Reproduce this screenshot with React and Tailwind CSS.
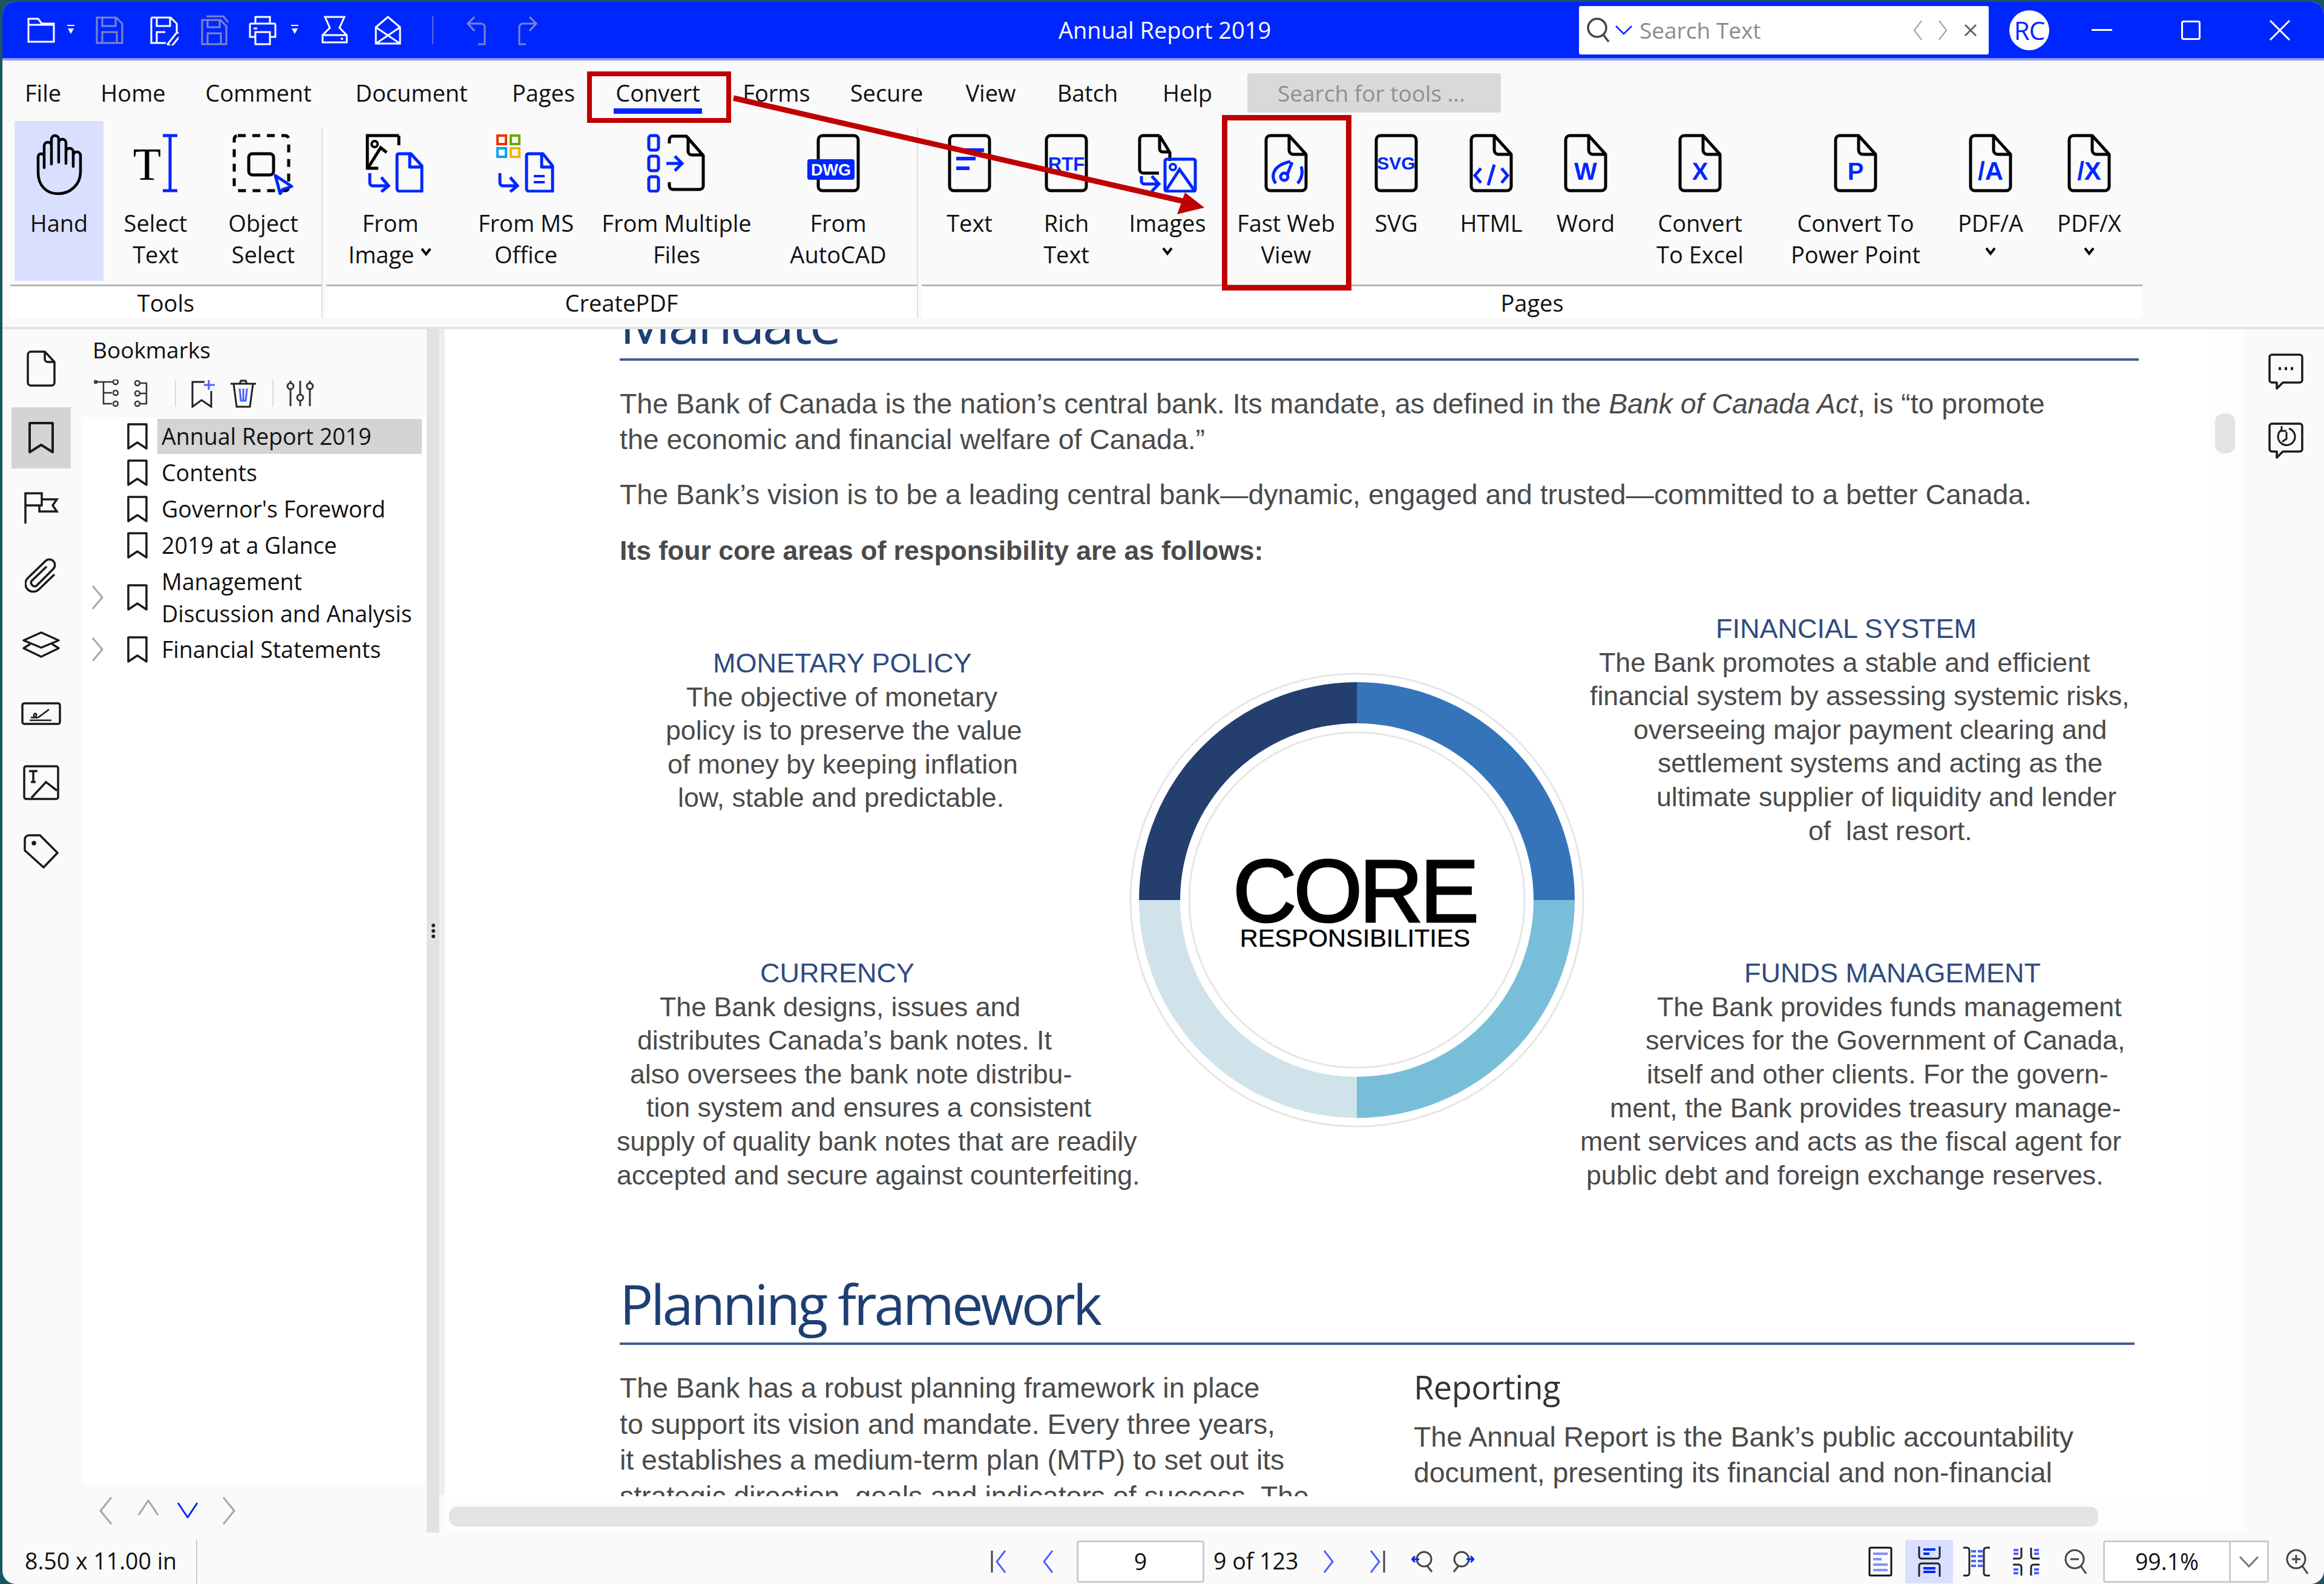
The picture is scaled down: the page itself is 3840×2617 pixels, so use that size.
import React from "react";

const BLUE = "#0026ff";

// small icons for the title bar
const QuickIcon = ({ className, children, vb = "0 0 48 50" }) => (
  <svg viewBox={vb} fill="none" strokeWidth="3" stroke="currentColor" className={className}>
    {children}
  </svg>
);

const DropTri = ({ className }) => (
  <svg viewBox="0 0 14 18" className={className} fill="#fff">
    <rect x="1" y="0" width="12" height="2" />
    <path d="M2 6h10l-5 9z" />
  </svg>
);

const DocFold = ({ children, className = "" }) => (
  <svg viewBox="0 0 72 97" fill="none" className={`w-[72px] h-[97px] ${className}`}>
    <path
      d="M41 3H10a7 7 0 0 0-7 7v77a7 7 0 0 0 7 7h52a7 7 0 0 0 7-7V34L41 3zM41 3v24a7 7 0 0 0 7 7h21"
      stroke="#000"
      strokeWidth="5"
      strokeLinejoin="round"
    />
    {children}
  </svg>
);

const DocPlain = ({ children, className = "" }) => (
  <svg viewBox="0 0 72 97" fill="none" className={`w-[72px] h-[97px] overflow-visible ${className}`}>
    <rect x="3" y="3" width="66" height="91" rx="7" stroke="#000" strokeWidth="5" />
    {children}
  </svg>
);

const BlueText = ({ x, y, size, children }) => (
  <text x={x} y={y} textAnchor="middle" fontSize={size} fontWeight="700" fontFamily="Liberation Sans" fill={BLUE}>
    {children}
  </text>
);

const Caret = ({ className = "" }) => (
  <svg viewBox="0 0 20 14" fill="none" stroke="#000" strokeWidth="4" className={`w-[20px] h-[14px] ${className}`}>
    <path d="M3 2l7 9 7-9" />
  </svg>
);

const HandIcon = () => (
  <svg viewBox="0 0 76 102" fill="none" stroke="#000" strokeWidth="4.5" strokeLinecap="round" className="w-[76px] h-[102px]">
    <path d="M3 64V38a5 5 0 0 1 10 0v18M13 40V20a6 6 0 0 1 12 0v30M25 30V9a6 6 0 0 1 12 0v38M37 28V15a6 6 0 0 1 12 0v34M49 30a6 6 0 0 1 12 0v24" />
    <path d="M3 64c0 22 14 35 33 35s37-14 37-36V36a6 6 0 0 0-12 0" />
  </svg>
);

const SelectTextIcon = () => (
  <svg viewBox="0 0 76 97" fill="none" className="w-[76px] h-[97px]">
    <text x="24" y="76" textAnchor="middle" fontSize="76" fontFamily="Liberation Serif" fill="#000">T</text>
    <path d="M62 3v91M50 3h24M50 94h24" stroke={BLUE} strokeWidth="5" />
  </svg>
);

const ObjectSelectIcon = () => (
  <svg viewBox="0 0 102 101" fill="none" className="w-[102px] h-[101px]">
    <rect x="3" y="3" width="90" height="91" rx="6" stroke="#000" strokeWidth="5" strokeDasharray="13 11" />
    <rect x="27" y="33" width="41" height="35" rx="6" stroke="#000" strokeWidth="5" />
    <path d="M71 69l27 18-15 5-4 7z" stroke={BLUE} strokeWidth="5" strokeLinejoin="round" fill="#fafafa" />
  </svg>
);

const FromImageIcon = () => (
  <svg viewBox="0 0 98 97" fill="none" className="w-[98px] h-[97px] ml-[16px]">
    <path d="M55 3H3v54h18" stroke="#000" strokeWidth="5" />
    <path d="M55 3v16" stroke="#000" strokeWidth="5" />
    <circle cx="15" cy="17" r="5" stroke="#000" strokeWidth="4" />
    <path d="M5 55l20-32 10 8" stroke="#000" strokeWidth="5" />
    <path d="M52 35v56a4 4 0 0 0 4 4h37V53L75 33H56a4 4 0 0 0-4 2zM73 34v21h20" stroke={BLUE} strokeWidth="5" strokeLinejoin="round" />
    <path d="M7 65v16a5 5 0 0 0 5 5h24M26 72l12 14-12 10" stroke={BLUE} strokeWidth="5" />
  </svg>
);

const OfficeIcon = () => (
  <svg viewBox="0 0 98 97" fill="none" className="w-[98px] h-[97px]">
    <rect x="2" y="3" width="14" height="14" stroke="#f03000" strokeWidth="4" />
    <rect x="24" y="3" width="14" height="14" stroke="#6aaa00" strokeWidth="4" />
    <rect x="2" y="24" width="14" height="14" stroke="#00a5ef" strokeWidth="4" />
    <rect x="24" y="24" width="14" height="14" stroke="#fcb100" strokeWidth="4" />
    <path d="M50 35v56a4 4 0 0 0 4 4h39V53L77 33H54a4 4 0 0 0-4 2zM75 34v21h18" stroke={BLUE} strokeWidth="5" strokeLinejoin="round" />
    <path d="M62 70h18M62 80h18" stroke={BLUE} strokeWidth="4" />
    <path d="M6 65v16a5 5 0 0 0 5 5h22M23 72l12 14-12 10" stroke={BLUE} strokeWidth="5" />
  </svg>
);

const MultiFilesIcon = () => (
  <svg viewBox="0 0 98 97" fill="none" className="w-[98px] h-[97px]">
    <rect x="3" y="3" width="16" height="24" rx="4" stroke={BLUE} strokeWidth="5" />
    <rect x="3" y="37" width="16" height="24" rx="4" stroke={BLUE} strokeWidth="5" />
    <rect x="3" y="71" width="16" height="24" rx="4" stroke={BLUE} strokeWidth="5" />
    <path d="M37 16v-6a6 6 0 0 1 6-6h22l28 32v50a6 6 0 0 1-6 6H43a6 6 0 0 1-6-6v-6" stroke="#000" strokeWidth="5" strokeLinejoin="round" />
    <path d="M68 5v24a6 6 0 0 0 6 6h19" stroke="#000" strokeWidth="5" />
    <path d="M32 49h24M46 37l12 12-12 12" stroke={BLUE} strokeWidth="5" />
  </svg>
);

const ImagesIcon = () => (
  <svg viewBox="0 0 98 97" fill="none" className="w-[98px] h-[97px]">
    <path d="M36 3H9a6 6 0 0 0-6 6v50a6 6 0 0 0 6 6h26M36 3l17 28v14M36 3v22a5 5 0 0 0 5 5h12" stroke="#000" strokeWidth="5" strokeLinejoin="round" />
    <rect x="45" y="42" width="50" height="53" rx="3" stroke={BLUE} strokeWidth="5" />
    <circle cx="58" cy="55" r="5" stroke={BLUE} strokeWidth="4" />
    <path d="M47 93l22-34 24 34" stroke={BLUE} strokeWidth="5" />
    <path d="M6 70v8a5 5 0 0 0 5 5h22M23 70l12 13-12 12" stroke={BLUE} strokeWidth="5" />
  </svg>
);

const RibbonItem = ({ width, icon, lines, caret, inlineCaret, bg = "" }) => (
  <div className={`${width} ${bg} h-[264px] flex flex-col items-center shrink-0`}>
    <div className="h-[142px] pt-[21px] flex justify-center">{icon}</div>
    {lines.map((line, i) => (
      <div key={i} className="h-[52px] leading-[52px] flex items-center whitespace-nowrap">
        {line}
        {inlineCaret && i === 1 && <Caret className="ml-[10px] mb-[8px]" />}
      </div>
    ))}
    {caret && <Caret className="mt-[14px]" />}
  </div>
);

const BookmarkGlyph = ({ className = "" }) => (
  <svg viewBox="0 0 34 44" fill="none" stroke="#1a1a1a" strokeWidth="3.5" className={`w-[34px] h-[44px] ${className}`}>
    <path d="M2 2h30v40L17 32 2 42z" strokeLinejoin="round" />
  </svg>
);

const Chevron = ({ d, color = "#a6a6a6", className }) => (
  <svg viewBox="0 0 40 50" fill="none" stroke={color} strokeWidth="3" className={className}>
    <path d={d} strokeLinejoin="round" />
  </svg>
);

const CoreRing = () => (
  <div className="relative w-[752px] h-[752px] mt-[172px] -mr-[18px] shrink-0">
    <svg viewBox="0 0 752 752" fill="none" className="w-[752px] h-[752px]">
      <circle cx="376" cy="376" r="374" stroke="#e6e6e6" strokeWidth="3" />
      <circle cx="376" cy="376" r="277" stroke="#e6e6e6" strokeWidth="3" />
      <path d="M376 16a360 360 0 0 1 360 360h-68a292 292 0 0 0-292-292z" fill="#3674ba" />
      <path d="M736 376a360 360 0 0 1-360 360v-68a292 292 0 0 0 292-292z" fill="#79bed9" />
      <path d="M376 736A360 360 0 0 1 16 376h68a292 292 0 0 0 292 292z" fill="#d1e3ea" />
      <path d="M16 376A360 360 0 0 1 376 16v68A292 292 0 0 0 84 376z" fill="#243f6e" />
    </svg>
    <div className="absolute inset-0 flex flex-col items-center pt-[308px] text-black font-['Liberation_Sans']">
      <div className="text-[146px] leading-[108px] tracking-[-5px] -ml-[8px] [-webkit-text-stroke:3px_#000]">CORE</div>
      <div className="text-[41.5px] leading-[46px] -ml-[6px] [-webkit-text-stroke:0.4px_#000]">RESPONSIBILITIES</div>
    </div>
  </div>
);

const SectionTitle = ({ className, children }) => (
  <div className={`h-[55.6px] leading-[55.6px] text-[45px] text-[#2f4b80] whitespace-nowrap ${className}`}>{children}</div>
);

const Line = ({ className = "", children }) => (
  <div className={`h-[55.6px] leading-[55.6px] whitespace-pre ${className}`}>{children}</div>
);

export default function App() {
  return (
    <div className="relative w-[3840px] h-[2617px] bg-[#1b5560] pl-[4px] pt-[3px] overflow-hidden font-['Open_Sans',sans-serif] text-[38px] text-[#111]">
      <div className="flex flex-col w-full h-full rounded-[22px] overflow-hidden bg-[#fafafa]">
        {/* title bar */}
        <div className="h-[97px] shrink-0 flex items-center bg-[#0026ff] border-b-[4px] border-[#8c9cf5] text-white">
          <div className="w-[1745px] shrink-0 flex items-center">
            <QuickIcon className="w-[48px] h-[50px] ml-[40px]">
              <path d="M3 44V6h16l6 8h20v30zM3 16h42" />
            </QuickIcon>
            <DropTri className="w-[14px] h-[18px] ml-[18px]" />
            <QuickIcon className="w-[48px] h-[50px] ml-[33px] text-[#7d86c9]">
              <path d="M3 4h32l10 10v32H3zM12 4v14h22V4M12 46V28h24v18" />
            </QuickIcon>
            <QuickIcon className="w-[48px] h-[50px] ml-[42px]">
              <path d="M3 4h32l10 10v14M3 4v42h24M12 4v14h22V4M12 46V28h14" />
              <path d="M30 48l14-18a4 4 0 0 1 6 5L36 52z" />
            </QuickIcon>
            <QuickIcon className="w-[48px] h-[50px] ml-[36px] text-[#7d86c9]">
              <path d="M3 8h30l10 10v30H3zM12 8v12h20V8M12 48V30h22v18M10 2h28l8 10" />
            </QuickIcon>
            <QuickIcon className="w-[48px] h-[50px] ml-[31px]">
              <path d="M12 14V3h24v11M12 36H3V16a2 2 0 0 1 2-2h38a2 2 0 0 1 2 2v20h-9M12 28h24v20H12zM9 22h6" />
            </QuickIcon>
            <DropTri className="w-[14px] h-[18px] ml-[22px]" />
            <QuickIcon className="w-[48px] h-[50px] ml-[35px]">
              <path d="M8 3h32l-8 18 12 12v12H4V33l12-12zM4 33h40M34 39h4" />
            </QuickIcon>
            <QuickIcon className="w-[48px] h-[50px] ml-[40px]">
              <path d="M24 3L4 20v27h40V20zM4 20l40 27M44 20L4 47" />
            </QuickIcon>
            <div className="w-[2px] h-[46px] ml-[49px] bg-[#5c6ae0]" />
            <QuickIcon vb="0 0 36 50" className="w-[36px] h-[50px] ml-[54px] text-[#7d86c9]">
              <path d="M14 3L3 14l11 12M3 14h22a6 6 0 0 1 6 6v28H20" />
            </QuickIcon>
            <QuickIcon vb="0 0 36 50" className="w-[36px] h-[50px] ml-[47px] text-[#7d86c9]">
              <path d="M22 3l11 11-11 12M33 14H11a6 6 0 0 0-6 6v28h11" />
            </QuickIcon>
          </div>
          <div className="w-[860px] shrink-0 whitespace-nowrap">Annual Report 2019</div>
          <div className="w-[677px] h-[80px] shrink-0 bg-white rounded-[3px] flex items-center text-[#8c8c8c] text-[37px]">
            <svg viewBox="0 0 40 44" fill="none" stroke="#444" strokeWidth="3.5" className="w-[40px] h-[44px] ml-[12px]">
              <circle cx="18" cy="18" r="15" />
              <path d="M28 29l9 12" />
            </svg>
            <svg viewBox="0 0 30 18" fill="none" stroke={BLUE} strokeWidth="2.5" className="w-[30px] h-[18px] ml-[7px]">
              <path d="M2 2l13 13L28 2" />
            </svg>
            <span className="ml-[11px] w-[215px] whitespace-nowrap">Search Text</span>
            <Chevron d="M28 4L12 25l16 21" className="w-[30px] h-[44px] ml-[230px]" />
            <Chevron d="M12 4l16 21-16 21" className="w-[30px] h-[44px] ml-[11px]" />
            <svg viewBox="0 0 22 22" fill="none" stroke="#666" strokeWidth="3" className="w-[22px] h-[22px] ml-[20px]">
              <path d="M2 2l18 18M20 2L2 20" />
            </svg>
          </div>
          <div className="w-[66px] h-[66px] ml-[34px] rounded-full bg-white text-[#0026ff] flex items-center justify-center text-[42px] tracking-[-1px]">RC</div>
          <div className="w-[147px] ml-[14px] flex justify-center">
            <div className="w-[34px] h-[3px] bg-white" />
          </div>
          <div className="w-[147px] flex justify-center">
            <div className="w-[32px] h-[32px] rounded-[4px] border-[3px] border-white" />
          </div>
          <div className="w-[147px] flex justify-center">
            <svg viewBox="0 0 36 36" fill="none" stroke="#fff" strokeWidth="3" className="w-[36px] h-[36px]">
              <path d="M2 2l32 32M34 2L2 34" />
            </svg>
          </div>
        </div>

        {/* menu tabs */}
        <div className="h-[100px] shrink-0 flex items-start pt-[27px]">
          <div className="w-[134px] text-center leading-[52px]">File</div>
          <div className="w-[164px] text-center leading-[52px]">Home</div>
          <div className="w-[250px] text-center leading-[52px]">Comment</div>
          <div className="w-[256px] text-center leading-[52px]">Document</div>
          <div className="w-[180px] text-center leading-[52px]">Pages</div>
          <div className="w-[198px] flex flex-col items-center leading-[52px]">
            <div>Convert</div>
            <div className="w-[146px] h-[9px] bg-[#0026ff]" />
          </div>
          <div className="w-[194px] text-center leading-[52px]">Forms</div>
          <div className="w-[170px] text-center leading-[52px]">Secure</div>
          <div className="w-[174px] text-center leading-[52px]">View</div>
          <div className="w-[146px] text-center leading-[52px]">Batch</div>
          <div className="w-[184px] text-center leading-[52px]">Help</div>
          <div className="w-[419px] h-[65px] ml-[7px] -mt-[6px] bg-[#d9d9d9] rounded-[4px] pl-[50px] leading-[65px] text-[37px] text-[#8f8f8f] whitespace-nowrap">Search for tools ...</div>
        </div>

        {/* ribbon */}
        <div className="h-[325px] shrink-0 flex items-start">
          <div className="w-[514px] ml-[13px] shrink-0 flex flex-col">
            <div className="h-[270px] flex pl-[7px]">
              <RibbonItem width="w-[147px]" bg="bg-[#d9e0ff]" icon={<HandIcon />} lines={["Hand"]} />
              <RibbonItem width="w-[172px]" icon={<SelectTextIcon />} lines={["Select", "Text"]} />
              <RibbonItem width="w-[184px]" icon={<ObjectSelectIcon />} lines={["Object", "Select"]} />
            </div>
            <div className="h-[3px] bg-[#b5b5b5]" />
            <div className="h-[52px] bg-white text-center leading-[55px]">Tools</div>
          </div>
          <div className="w-[2px] h-[315px] mt-[10px] bg-[#dedede] shrink-0" />
          <div className="w-[976px] ml-[6px] shrink-0 flex flex-col">
            <div className="h-[270px] flex">
              <RibbonItem width="w-[212px]" icon={<FromImageIcon />} lines={["From", "Image"]} inlineCaret />
              <RibbonItem width="w-[236px]" icon={<OfficeIcon />} lines={["From MS", "Office"]} />
              <RibbonItem width="w-[262px]" icon={<MultiFilesIcon />} lines={["From Multiple", "Files"]} />
              <RibbonItem
                width="w-[266px] pl-[6px]"
                lines={["From", "AutoCAD"]}
                icon={
                  <DocPlain>
                    <rect x="-15" y="42" width="78" height="34" rx="4" fill={BLUE} />
                    <text x="24" y="69" textAnchor="middle" fontSize="27" fontWeight="700" fontFamily="Liberation Sans" fill="#fff">DWG</text>
                  </DocPlain>
                }
              />
            </div>
            <div className="h-[3px] bg-[#b5b5b5]" />
            <div className="h-[52px] bg-white text-center leading-[55px]">CreatePDF</div>
          </div>
          <div className="w-[2px] h-[315px] mt-[10px] bg-[#dedede] shrink-0" />
          <div className="w-[2017px] ml-[6px] shrink-0 flex flex-col">
            <div className="h-[270px] flex">
              <RibbonItem
                width="w-[158px]"
                lines={["Text"]}
                icon={
                  <DocPlain>
                    <path d="M14 27h46M14 41h32M14 57h22" stroke={BLUE} strokeWidth="6" />
                  </DocPlain>
                }
              />
              <RibbonItem
                width="w-[162px]"
                lines={["Rich", "Text"]}
                icon={
                  <DocPlain>
                    <BlueText x="36" y="61" size="31">RTF</BlueText>
                  </DocPlain>
                }
              />
              <RibbonItem width="w-[172px]" icon={<ImagesIcon />} lines={["Images"]} caret />
              <RibbonItem
                width="w-[220px]"
                lines={["Fast Web", "View"]}
                icon={
                  <DocFold>
                    <path d="M19 82C10 70 14 52 43 46M61 54c3 10 1 20-6 28" stroke={BLUE} strokeWidth="5" />
                    <circle cx="33" cy="71" r="6" stroke={BLUE} strokeWidth="5" />
                    <path d="M38 67l8-20" stroke={BLUE} strokeWidth="5" />
                  </DocFold>
                }
              />
              <RibbonItem
                width="w-[144px]"
                lines={["SVG"]}
                icon={
                  <DocPlain>
                    <BlueText x="36" y="59" size="30">SVG</BlueText>
                  </DocPlain>
                }
              />
              <RibbonItem
                width="w-[170px]"
                lines={["HTML"]}
                icon={
                  <DocFold>
                    <path d="M19 57L9 69l10 12M53 57l10 12-10 12M41 51L31 85" stroke={BLUE} strokeWidth="5" />
                  </DocFold>
                }
              />
              <RibbonItem
                width="w-[142px]"
                lines={["Word"]}
                icon={
                  <DocFold>
                    <BlueText x="36" y="76" size="40">W</BlueText>
                  </DocFold>
                }
              />
              <RibbonItem
                width="w-[236px]"
                lines={["Convert", "To Excel"]}
                icon={
                  <DocFold>
                    <BlueText x="36" y="76" size="40">X</BlueText>
                  </DocFold>
                }
              />
              <RibbonItem
                width="w-[278px]"
                lines={["Convert To", "Power Point"]}
                icon={
                  <DocFold>
                    <BlueText x="36" y="76" size="40">P</BlueText>
                  </DocFold>
                }
              />
              <RibbonItem
                width="w-[168px]"
                lines={["PDF/A"]}
                caret
                icon={
                  <DocFold>
                    <BlueText x="36" y="76" size="42">/A</BlueText>
                  </DocFold>
                }
              />
              <RibbonItem
                width="w-[158px]"
                lines={["PDF/X"]}
                caret
                icon={
                  <DocFold>
                    <BlueText x="36" y="76" size="42">/X</BlueText>
                  </DocFold>
                }
              />
            </div>
            <div className="h-[3px] bg-[#b5b5b5]" />
            <div className="h-[52px] bg-white text-center leading-[55px]">Pages</div>
          </div>
        </div>
        <div className="h-[15px] shrink-0" />
        <div className="h-[4px] shrink-0 bg-[#e4e4e4]" />

        {/* main area */}
        <div className="flex-1 min-h-0 flex">
          {/* icon rail */}
          <div className="w-[133px] shrink-0 flex flex-col items-center pt-[8px] pr-[5px]">
            <div className="h-[114px] flex items-center justify-center">
              <svg viewBox="0 0 48 60" fill="none" stroke="#1a1a1a" strokeWidth="3.5" className="w-[48px] h-[60px]">
                <path d="M30 2H7a5 5 0 0 0-5 5v46a5 5 0 0 0 5 5h34a5 5 0 0 0 5-5V19zM30 2v12a5 5 0 0 0 5 5h11" strokeLinejoin="round" />
              </svg>
            </div>
            <div className="h-[114px] flex items-center justify-center">
              <div className="w-[98px] h-[101px] bg-[#d4d4d4] flex items-center justify-center">
                <svg viewBox="0 0 44 54" fill="none" stroke="#1a1a1a" strokeWidth="4" className="w-[44px] h-[54px]">
                  <path d="M3 3h38v48L22 39 3 51z" strokeLinejoin="round" />
                </svg>
              </div>
            </div>
            <div className="h-[114px] flex items-center justify-center">
              <svg viewBox="0 0 58 56" fill="none" stroke="#1a1a1a" strokeWidth="3.5" className="w-[58px] h-[56px]">
                <path d="M3 56V6h27v10h25l-7 10 7 10H26V26H3M30 16v10h-4" />
              </svg>
            </div>
            <div className="h-[114px] flex items-center justify-center">
              <svg viewBox="0 0 54 58" fill="none" stroke="#1a1a1a" strokeWidth="3.5" className="w-[54px] h-[58px]">
                <path d="M36 14L11 38a6 6 0 0 0 8 8l28-28a9 9 0 0 0-13-13L5 33a13 13 0 0 0 18 19l26-25" />
              </svg>
            </div>
            <div className="h-[114px] flex items-center justify-center">
              <svg viewBox="0 0 64 44" fill="none" stroke="#1a1a1a" strokeWidth="3.5" className="w-[64px] h-[44px]">
                <path d="M32 2l29 13-29 12L3 15zM14 21L3 28l29 14 29-14-11-7" strokeLinejoin="round" />
              </svg>
            </div>
            <div className="h-[114px] flex items-center justify-center">
              <svg viewBox="0 0 66 38" fill="none" stroke="#1a1a1a" strokeWidth="3.5" className="w-[66px] h-[38px]">
                <rect x="2" y="2" width="62" height="34" rx="3" />
                <path d="M14 30h36M16 25c6 2 10-1 9-5-2-3-5 0-4 4 3 3 7 2 9 0l16-12" strokeWidth="2.5" />
              </svg>
            </div>
            <div className="h-[114px] flex items-center justify-center">
              <svg viewBox="0 0 60 58" fill="none" stroke="#1a1a1a" strokeWidth="3.5" className="w-[60px] h-[58px]">
                <rect x="2" y="2" width="56" height="54" rx="3" />
                <path d="M10 10h14M17 10v18M13 28h8" strokeWidth="3.5" />
                <path d="M14 54l24-26 18 14" />
              </svg>
            </div>
            <div className="h-[114px] flex items-center justify-center">
              <svg viewBox="0 0 60 58" fill="none" stroke="#1a1a1a" strokeWidth="3.5" className="w-[60px] h-[58px]">
                <path d="M10 2h18l29 29-23 24L3 27V9a7 7 0 0 1 7-7z" strokeLinejoin="round" />
                <circle cx="18" cy="15" r="2" fill="#1a1a1a" />
              </svg>
            </div>
          </div>

          {/* bookmarks panel */}
          <div className="w-[568px] shrink-0 flex flex-col text-[37.5px]">
            <div className="h-[146px] shrink-0 pt-[8px]">
              <div className="pl-[16px] leading-[52px] text-[37px]">Bookmarks</div>
              <div className="flex items-center mt-[21px] h-[50px]">
                <svg viewBox="0 0 44 46" fill="none" stroke="#333" strokeWidth="2.5" className="w-[44px] h-[46px] ml-[18px]">
                  <path d="M3 4h30M16 4v36h14M16 22h14" />
                  <circle cx="3" cy="4" r="2" />
                  <circle cx="36" cy="4" r="4" />
                  <circle cx="36" cy="22" r="4" />
                  <circle cx="36" cy="40" r="4" />
                </svg>
                <svg viewBox="0 0 26 46" fill="none" stroke="#333" strokeWidth="2.5" className="w-[26px] h-[46px] ml-[21px]">
                  <circle cx="7" cy="6" r="4" />
                  <circle cx="7" cy="23" r="4" />
                  <circle cx="7" cy="40" r="4" />
                  <path d="M11 6h11v34H11M11 23h11" />
                </svg>
                <div className="w-[2px] h-[44px] ml-[43px] bg-[#dcdcdc]" />
                <svg viewBox="0 0 42 48" fill="none" strokeWidth="3" className="w-[42px] h-[48px] ml-[25px]">
                  <path d="M22 5H2v41l15-11 16 11V20" stroke="#222" />
                  <path d="M29 2v16M21 10h18" stroke="#4a63ff" />
                </svg>
                <svg viewBox="0 0 44 48" fill="none" strokeWidth="3" className="w-[44px] h-[48px] ml-[22px]">
                  <path d="M1 8h42M16 8l2-5h8l2 5M6 8l5 38h22l5-38" stroke="#222" />
                  <path d="M16 16l2 20h8l2-20M22 16v20" stroke="#4a63ff" />
                </svg>
                <div className="w-[2px] h-[44px] ml-[26px] bg-[#dcdcdc]" />
                <svg viewBox="0 0 46 46" fill="none" stroke="#333" strokeWidth="3" className="w-[46px] h-[46px] ml-[21px]">
                  <path d="M7 16v28M23 2v22M23 36v8M39 16v28M39 2v4M7 2v4" />
                  <circle cx="7" cy="11" r="5" />
                  <circle cx="23" cy="30" r="5" />
                  <circle cx="39" cy="11" r="5" />
                </svg>
              </div>
            </div>
            <div className="flex-1 bg-white pt-[1px]">
              <div className="h-[60px] flex items-center">
                <BookmarkGlyph className="ml-[73px]" />
                <div className="ml-[16px] w-[437px] h-[58px] bg-[#d4d4d4] pl-[7px] leading-[58px] whitespace-nowrap">Annual Report 2019</div>
              </div>
              <div className="h-[60px] flex items-center">
                <BookmarkGlyph className="ml-[73px]" />
                <div className="ml-[23px] whitespace-nowrap">Contents</div>
              </div>
              <div className="h-[60px] flex items-center">
                <BookmarkGlyph className="ml-[73px]" />
                <div className="ml-[23px] whitespace-nowrap">Governor&#39;s Foreword</div>
              </div>
              <div className="h-[60px] flex items-center">
                <BookmarkGlyph className="ml-[73px]" />
                <div className="ml-[23px] whitespace-nowrap">2019 at a Glance</div>
              </div>
              <div className="h-[112px] flex items-center">
                <Chevron d="M6 6l16 19-16 19" className="w-[40px] h-[50px] ml-[10px]" />
                <BookmarkGlyph className="ml-[23px]" />
                <div className="ml-[23px] leading-[53px] whitespace-nowrap">
                  Management
                  <br />
                  Discussion and Analysis
                </div>
              </div>
              <div className="h-[60px] flex items-center">
                <Chevron d="M6 6l16 19-16 19" className="w-[40px] h-[50px] ml-[10px]" />
                <BookmarkGlyph className="ml-[23px]" />
                <div className="ml-[23px] whitespace-nowrap">Financial Statements</div>
              </div>
            </div>
            <div className="h-[80px] shrink-0 flex items-center pt-[8px]">
              <Chevron d="M24 3L6 25l18 22" className="w-[40px] h-[50px] ml-[23px]" />
              <Chevron d="M4 32L20 8l16 24" className="w-[40px] h-[50px] ml-[25px]" />
              <Chevron d="M4 12l16 24 16-24" color={BLUE} className="w-[40px] h-[50px] ml-[25px]" />
              <Chevron d="M16 3l18 22-18 22" className="w-[40px] h-[50px] ml-[23px]" />
            </div>
          </div>

          {/* splitter */}
          <div className="w-[21px] shrink-0 bg-[#e2e2e2] flex flex-col items-center justify-center gap-[3px]">
            <div className="w-[6px] h-[6px] rounded-full bg-[#222]" />
            <div className="w-[6px] h-[6px] rounded-full bg-[#222]" />
            <div className="w-[6px] h-[6px] rounded-full bg-[#222]" />
          </div>
          <div className="w-[9px] shrink-0 h-[1926px] bg-[#eeeeee]" />

          {/* document */}
          <div className="flex-1 min-w-0 flex flex-col">
            <div className="h-[1928px] shrink-0 flex">
              <div className="w-[2915px] shrink-0 bg-white overflow-hidden pl-[289px] font-['Liberation_Sans'] text-[46.4px] text-[#4a4a4a]">
                <div className="h-[48px] overflow-hidden flex items-end pb-[10px] font-['Open_Sans'] font-medium text-[94px] tracking-[-4px] leading-[100px] text-[#1f3f73]">Mandate</div>
                <div className="w-[2510px] h-[4px] bg-[#3f5f8f]" />
                <div className="mt-[42px] leading-[59px] whitespace-nowrap">
                  The Bank of Canada is the nation’s central bank. Its mandate, as defined in the <i>Bank of Canada Act</i>, is “to promote
                  <br />
                  the economic and financial welfare of Canada.”
                </div>
                <div className="mt-[32px] leading-[59px] whitespace-nowrap">The Bank’s vision is to be a leading central bank—dynamic, engaged and trusted—committed to a better Canada.</div>
                <div className="mt-[33px] leading-[59px] text-[44.5px] font-bold whitespace-nowrap">Its four core areas of responsibility are as follows:</div>

                {/* core responsibilities */}
                <div className="flex h-[1030px] -ml-[24px] text-[44.7px]">
                  <div className="w-[866px] shrink-0 pt-[129px]">
                    <SectionTitle className="ml-[178px]">MONETARY POLICY</SectionTitle>
                    <Line className="ml-[134px]">The objective of monetary</Line>
                    <Line className="ml-[100px]">policy is to preserve the value</Line>
                    <Line className="ml-[103px]">of money by keeping inflation</Line>
                    <Line className="ml-[120px]">low, stable and predictable.</Line>
                    <SectionTitle className="mt-[234px] ml-[256px]">CURRENCY</SectionTitle>
                    <Line className="ml-[90px]">The Bank designs, issues and</Line>
                    <Line className="ml-[53px]">distributes Canada’s bank notes. It</Line>
                    <Line className="ml-[41px]">also oversees the bank note distribu-</Line>
                    <Line className="ml-[68px]">tion system and ensures a consistent</Line>
                    <Line className="ml-[19px]">supply of quality bank notes that are readily</Line>
                    <Line className="ml-[19px]">accepted and secure against counterfeiting.</Line>
                  </div>
                  <CoreRing />
                  <div className="flex-1 pt-[72px]">
                    <SectionTitle className="ml-[235px]">FINANCIAL SYSTEM</SectionTitle>
                    <Line className="ml-[42px]">The Bank promotes a stable and efficient</Line>
                    <Line className="ml-[27px]">financial system by assessing systemic risks,</Line>
                    <Line className="ml-[99px]">overseeing major payment clearing and</Line>
                    <Line className="ml-[139px]">settlement systems and acting as the</Line>
                    <Line className="ml-[137px]">ultimate supplier of liquidity and lender</Line>
                    <Line className="ml-[388px]">of  last resort.</Line>
                    <SectionTitle className="mt-[180px] ml-[282px]">FUNDS MANAGEMENT</SectionTitle>
                    <Line className="ml-[138px]">The Bank provides funds management</Line>
                    <Line className="ml-[119px]">services for the Government of Canada,</Line>
                    <Line className="ml-[121px]">itself and other clients. For the govern-</Line>
                    <Line className="ml-[60px]">ment, the Bank provides treasury manage-</Line>
                    <Line className="ml-[11px]">ment services and acts as the fiscal agent for</Line>
                    <Line className="ml-[21px]">public debt and foreign exchange reserves.</Line>
                  </div>
                </div>

                <div className="mt-[130px] h-[110px] leading-[110px] font-['Open_Sans'] font-medium text-[92px] tracking-[-4px] text-[#1f3f73] whitespace-nowrap">Planning framework</div>
                <div className="mt-[9px] w-[2503px] h-[4px] bg-[#3f5f8f]" />
                <div className="flex mt-[42px]">
                  <div className="w-[1312px] shrink-0 leading-[59.5px] whitespace-nowrap">
                    The Bank has a robust planning framework in place
                    <br />
                    to support its vision and mandate. Every three years,
                    <br />
                    it establishes a medium-term plan (MTP) to set out its
                    <br />
                    strategic direction, goals and indicators of success. The
                  </div>
                  <div className="whitespace-nowrap -mt-[3px]">
                    <div className="h-[60px] leading-[60px] font-['Open_Sans'] font-medium text-[54px] tracking-[-0.5px] text-[#333]">Reporting</div>
                    <div className="mt-[24px] leading-[59px]">
                      The Annual Report is the Bank’s public accountability
                      <br />
                      document, presenting its financial and non-financial
                    </div>
                  </div>
                </div>
              </div>
              <div className="flex-1 bg-[#fdfdfd] pl-[10px] pt-[139px]">
                <div className="w-[33px] h-[66px] rounded-[14px] bg-[#e3e3e3]" />
              </div>
            </div>
            <div className="flex-1 bg-[#fdfdfd] pt-[17px] pl-[7px]">
              <div className="w-[2725px] h-[33px] rounded-[14px] bg-[#e3e3e3]" />
            </div>
          </div>

          {/* right rail */}
          <div className="w-[129px] shrink-0 flex flex-col items-center pt-[40px] pl-[2px]">
            <svg viewBox="0 0 58 60" fill="none" stroke="#1a1a1a" strokeWidth="3.5" className="w-[58px] h-[60px]">
              <path d="M6 2h46a4 4 0 0 1 4 4v38a4 4 0 0 1-4 4H24l-10 10v-10H6a4 4 0 0 1-4-4V6a4 4 0 0 1 4-4z" strokeLinejoin="round" />
              <path d="M17 25h4M27 25h4M37 25h4" strokeWidth="5" />
            </svg>
            <svg viewBox="0 0 58 60" fill="none" stroke="#1a1a1a" strokeWidth="3.5" className="w-[58px] h-[60px] mt-[54px]">
              <path d="M6 2h46a4 4 0 0 1 4 4v38a4 4 0 0 1-4 4H24l-10 10v-10H6a4 4 0 0 1-4-4V6a4 4 0 0 1 4-4z" strokeLinejoin="round" />
              <path d="M22 12a14 14 0 1 0 12-2M30 16v11l-7 5M22 6v8h8" strokeWidth="3" />
            </svg>
          </div>
        </div>

        {/* status bar */}
        <div className="h-[85px] shrink-0 flex items-center pt-[10px] text-[37.5px]">
          <div className="w-[320px] pl-[37px] whitespace-nowrap">8.50 x 11.00 in</div>
          <div className="w-[2px] h-[72px] bg-[#cccccc]" />
          <svg viewBox="0 0 28 40" fill="none" strokeWidth="3" className="w-[28px] h-[40px] ml-[1311px]">
            <path d="M2 2v36" stroke="#444" />
            <path d="M24 2L10 20l14 18" stroke="#4a63ff" />
          </svg>
          <svg viewBox="0 0 20 40" fill="none" stroke="#4a63ff" strokeWidth="3" className="w-[20px] h-[40px] ml-[57px]">
            <path d="M17 2L3 20l14 18" />
          </svg>
          <div className="w-[211px] h-[70px] ml-[37px] bg-white border-[3px] border-[#cccccc] rounded-[4px] text-center leading-[64px]">9</div>
          <div className="ml-[15px] w-[141px] whitespace-nowrap">9 of 123</div>
          <svg viewBox="0 0 20 40" fill="none" stroke="#4a63ff" strokeWidth="3" className="w-[20px] h-[40px] ml-[39px]">
            <path d="M3 2l14 18L3 38" />
          </svg>
          <svg viewBox="0 0 28 40" fill="none" strokeWidth="3" className="w-[28px] h-[40px] ml-[56px]">
            <path d="M26 2v36" stroke="#444" />
            <path d="M4 2l14 18L4 38" stroke="#4a63ff" />
          </svg>
          <svg viewBox="0 0 38 38" fill="none" strokeWidth="3" className="w-[38px] h-[38px] ml-[43px]">
            <circle cx="21" cy="15" r="12" stroke="#444" />
            <path d="M26 26l8 10" stroke="#444" />
            <path d="M1 15h12M6 10l-5 5 5 5" stroke="#0026ff" />
          </svg>
          <svg viewBox="0 0 38 38" fill="none" strokeWidth="3" className="w-[38px] h-[38px] ml-[28px]">
            <circle cx="17" cy="15" r="12" stroke="#444" />
            <path d="M12 26l-8 10" stroke="#444" />
            <path d="M25 15h12M32 10l5 5-5 5" stroke="#0026ff" />
          </svg>

          <svg viewBox="0 0 40 50" fill="none" className="w-[40px] h-[50px] ml-[651px]">
            <rect x="2" y="2" width="36" height="46" rx="2" stroke="#111" strokeWidth="3" />
            <path d="M8 12h24M8 21h14M8 30h24M8 39h24" stroke="#7f92ff" strokeWidth="4" />
          </svg>
          <div className="w-[79px] h-[72px] ml-[21px] bg-[#d9e0ff] flex items-center justify-center">
            <svg viewBox="0 0 40 50" fill="none" className="w-[40px] h-[50px]">
              <path d="M3 0v16a4 4 0 0 0 4 4h26a4 4 0 0 0 4-4V0M3 50V32a4 4 0 0 1 4-4h26a4 4 0 0 1 4 4v18" stroke="#222" strokeWidth="3" />
              <path d="M10 5h20M10 12h10M10 36h20M10 42h20" stroke="#0026ff" strokeWidth="4" />
            </svg>
          </div>
          <svg viewBox="0 0 48 50" fill="none" className="w-[48px] h-[50px] ml-[15px]">
            <path d="M2 2h6a4 4 0 0 1 4 4v38a4 4 0 0 1-4 4H2M46 2h-6a4 4 0 0 0-4 4v38a4 4 0 0 0 4 4h6" stroke="#222" strokeWidth="3" />
            <path d="M15 8h8M15 16h8M15 24h8M15 32h8M26 8h8M26 16h8M26 24h8M26 32h8" stroke="#4a63ff" strokeWidth="4" />
          </svg>
          <svg viewBox="0 0 48 50" fill="none" className="w-[48px] h-[50px] ml-[34px]">
            <path d="M16 2v14a4 4 0 0 1-4 4H2M32 2v14a4 4 0 0 0 4 4h10M16 48V34a4 4 0 0 0-4-4H2M32 48V34a4 4 0 0 1 4-4h10" stroke="#222" strokeWidth="3" />
            <path d="M3 6h8M37 6h8M3 12h8M37 12h8M3 38h8M37 38h8M3 44h8M37 44h8" stroke="#4a63ff" strokeWidth="4" />
          </svg>
          <svg viewBox="0 0 38 44" fill="none" stroke="#444" strokeWidth="3" className="w-[38px] h-[44px] ml-[39px]">
            <circle cx="17" cy="18" r="15" />
            <path d="M27 29l9 13M10 18h14" />
          </svg>
          <div className="w-[274px] h-[70px] ml-[26px] bg-white border-[3px] border-[#cccccc] rounded-[4px] flex">
            <div className="w-[205px] text-center leading-[64px]">99.1%</div>
            <div className="flex-1 border-l-[3px] border-[#cccccc] flex items-center justify-center">
              <svg viewBox="0 0 34 20" fill="none" stroke="#777" strokeWidth="3" className="w-[34px] h-[20px]">
                <path d="M2 2l15 16L32 2" />
              </svg>
            </div>
          </div>
          <svg viewBox="0 0 38 44" fill="none" stroke="#444" strokeWidth="3" className="w-[38px] h-[44px] ml-[28px]">
            <circle cx="17" cy="18" r="15" />
            <path d="M27 29l9 13M10 18h14M17 11v14" />
          </svg>
        </div>
      </div>

      {/* red call-outs drawn on top of the shot */}
      <div className="absolute left-[970px] top-[118px] w-[238px] h-[85px] border-[8px] border-[#c00000]" />
      <div className="absolute left-[2019px] top-[190px] w-[214px] h-[290px] border-[9px] border-[#c00000]" />
      <svg viewBox="0 0 3840 560" fill="none" className="absolute left-0 top-0 w-[3840px] h-[560px] pointer-events-none">
        <path d="M1212 162L1962 334" stroke="#c00000" strokeWidth="9" />
        <path d="M1990 343L1958 318 1945 354z" fill="#c00000" />
      </svg>
    </div>
  );
}
